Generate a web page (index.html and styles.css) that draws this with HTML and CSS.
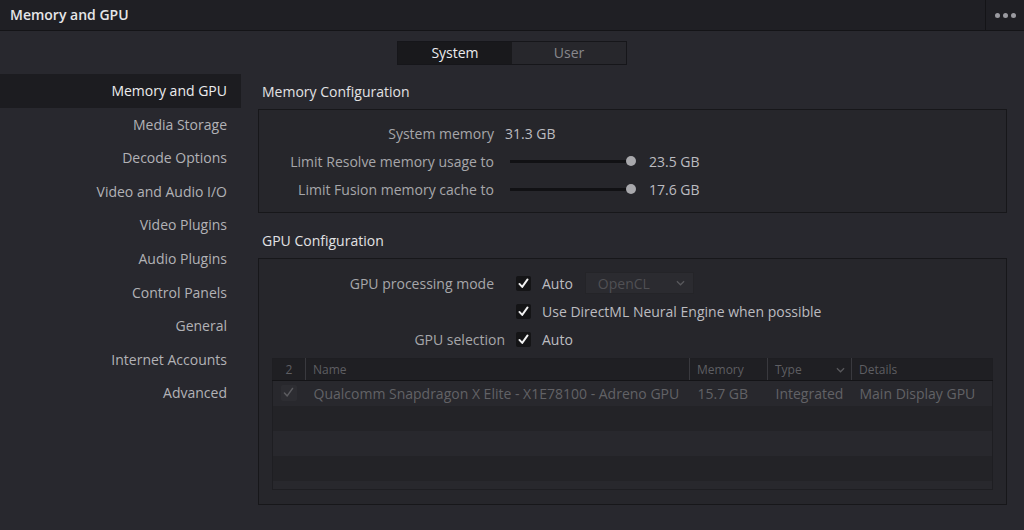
FILE: index.html
```html
<!DOCTYPE html>
<html lang="en">
<head>
    <meta charset="UTF-8">
    <title>Memory and GPU</title>
    <link rel="stylesheet" href="styles.css">
</head>
<body>
<div class="titlebar">
    <div class="title">Memory and GPU</div>
    <div class="more"><span></span><span></span><span></span></div>
</div>

<div class="tabs-row">
    <div class="tabs">
        <div class="tab active">System</div>
        <div class="tab">User</div>
    </div>
</div>

<div class="main">
    <ul class="sidebar">
        <li class="active">Memory and GPU</li>
        <li>Media Storage</li>
        <li>Decode Options</li>
        <li>Video and Audio I/O</li>
        <li>Video Plugins</li>
        <li>Audio Plugins</li>
        <li>Control Panels</li>
        <li>General</li>
        <li>Internet Accounts</li>
        <li>Advanced</li>
    </ul>

    <div class="content">
        <div class="heading first">Memory Configuration</div>
        <div class="box mem-box">
            <div class="row">
                <div class="label">System memory</div>
                <div class="value">31.3 GB</div>
            </div>
            <div class="row">
                <div class="label">Limit Resolve memory usage to</div>
                <div class="slider"><span class="knob"></span></div>
                <div class="value">23.5 GB</div>
            </div>
            <div class="row">
                <div class="label">Limit Fusion memory cache to</div>
                <div class="slider"><span class="knob"></span></div>
                <div class="value">17.6 GB</div>
            </div>
        </div>

        <div class="heading">GPU Configuration</div>
        <div class="box gpu-box">
            <div class="row">
                <div class="label wide pad">GPU processing mode</div>
                <span class="check"><svg viewBox="0 0 14 14"><path d="M3.2 7.4 L5.8 10.2 L10.8 3.2" /></svg></span>
                <div class="value">Auto</div>
                <div class="select">OpenCL <svg viewBox="0 0 10 6"><path d="M1 1 L5 5 L9 1" /></svg></div>
            </div>
            <div class="row">
                <div class="label wide"></div>
                <span class="check"><svg viewBox="0 0 14 14"><path d="M3.2 7.4 L5.8 10.2 L10.8 3.2" /></svg></span>
                <div class="value">Use DirectML Neural Engine when possible</div>
            </div>
            <div class="row">
                <div class="label wide">GPU selection</div>
                <span class="check"><svg viewBox="0 0 14 14"><path d="M3.2 7.4 L5.8 10.2 L10.8 3.2" /></svg></span>
                <div class="value">Auto</div>
            </div>

            <table class="gpu-table">
                <colgroup>
                    <col style="width:33px">
                    <col style="width:384px">
                    <col style="width:78px">
                    <col style="width:84px">
                    <col>
                </colgroup>
                <thead>
                    <tr>
                        <th class="num">2</th>
                        <th>Name</th>
                        <th>Memory</th>
                        <th>Type <svg class="th-arrow" viewBox="0 0 10 6"><path d="M1 1 L5 5 L9 1" /></svg></th>
                        <th>Details</th>
                    </tr>
                </thead>
                <tbody>
                    <tr>
                        <td class="num"><span class="check off"><svg viewBox="0 0 14 14"><path d="M3.2 7.4 L5.8 10.2 L10.8 3.2" /></svg></span></td>
                        <td>Qualcomm Snapdragon X Elite - X1E78100 - Adreno GPU</td>
                        <td>15.7 GB</td>
                        <td>Integrated</td>
                        <td>Main Display GPU</td>
                    </tr>
                    <tr><td></td><td></td><td></td><td></td><td></td></tr>
                    <tr><td></td><td></td><td></td><td></td><td></td></tr>
                    <tr><td></td><td></td><td></td><td></td><td></td></tr>
                    <tr><td></td><td></td><td></td><td></td><td></td></tr>
                </tbody>
            </table>
        </div>
    </div>
</div>
</body>
</html>
```

FILE: styles.css
```css
*{
    margin: 0;
    padding: 0;
    box-sizing: border-box;
}

body{
    background-color: #28282e;
    font-family: "Open Sans", "Noto Sans", sans-serif;
    font-size: 14px;
    color: #b8b8bc;
    width: 1024px;
    height: 530px;
    overflow: hidden;
}

.titlebar{
    display: flex;
    justify-content: space-between;
    height: 31px;
    background-color: #1f1f24;
    border-bottom: 1px solid #141417;
}

.title{
    padding-left: 10px;
    line-height: 30px;
    font-weight: 600;
    color: #e6e6e8;
}

.more{
    width: 39px;
    border-left: 1px solid #141417;
    display: flex;
    align-items: center;
    justify-content: center;
    gap: 3px;
}

.more span{
    width: 5px;
    height: 5px;
    border-radius: 50%;
    background-color: #9a9aa0;
}

.tabs-row{
    display: flex;
    justify-content: center;
    padding-top: 10px;
    height: 43px;
}

.tabs{
    display: flex;
    width: 230px;
    height: 24px;
    border: 1px solid #16161a;
    background-color: #27272c;
}

.tab{
    flex: 1;
    text-align: center;
    line-height: 22px;
    color: #88888c;
}

.tab.active{
    background-color: #19191c;
    color: #ececee;
}

.main{
    display: flex;
}

.sidebar{
    list-style: none;
    width: 241px;
}

.sidebar li{
    height: 33.6px;
    line-height: 33.6px;
    text-align: right;
    padding-right: 14px;
    color: #b2b2b6;
}

.sidebar li.active{
    background-color: #1c1c20;
    color: #ececee;
}

.content{
    margin-left: 17px;
    width: 749px;
}

.heading{
    height: 28px;
    line-height: 28px;
    padding-left: 4px;
    color: #e2e2e4;
    margin-top: 14px;
    margin-bottom: 3px;
}

.heading.first{
    margin-top: 4px;
}

.box{
    border: 1px solid #17171a;
    background-color: #26262b;
}

.mem-box{
    padding: 9px 0 9px 0;
}

.gpu-box{
    padding: 10px 13px 14px 13px;
}

.row{
    display: flex;
    align-items: center;
    height: 28px;
}

.label{
    width: 235px;
    text-align: right;
    color: #a6a6aa;
    margin-right: 11px;
}

.label.wide{
    width: 233px;
}

.label.pad{
    padding-right: 11px;
}

.value{
    color: #bcbcc0;
}

.slider{
    position: relative;
    width: 121px;
    height: 3px;
    margin-left: 5px;
    margin-right: 18px;
    background-color: #111114;
}

.knob{
    position: absolute;
    right: -5px;
    top: -4px;
    width: 10px;
    height: 10px;
    border-radius: 50%;
    background-color: #a8a8ac;
}

.check{
    display: inline-block;
    width: 15px;
    height: 15px;
    margin-right: 11px;
    border-radius: 2px;
    background-color: #141416;
}

.check svg{
    width: 15px;
    height: 15px;
    display: block;
}

.check path{
    fill: none;
    stroke: #f2f2f2;
    stroke-width: 1.8;
    stroke-linecap: round;
    stroke-linejoin: round;
}

.check.off{
    width: 16px;
    height: 16px;
    margin: 0;
    background-color: #2d2d32;
}

.check.off path{
    stroke: #5c5c60;
    stroke-width: 1.4;
}

.select{
    margin-left: 12px;
    width: 109px;
    height: 22px;
    padding-left: 12px;
    border: 1px solid #242428;
    background-color: #2b2b30;
    color: #505054;
    display: flex;
    align-items: center;
    gap: 26px;
}

.select svg{
    width: 9px;
    height: 6px;
}

.select path, .th-arrow path{
    fill: none;
    stroke: #58585c;
    stroke-width: 1.4;
}

.gpu-table{
    margin-top: 5px;
    width: 721px;
    table-layout: fixed;
    border-collapse: collapse;
    border: 1px solid #1e1e22;
    font-size: 14px;
}

.gpu-table th{
    height: 22px;
    background-color: #1f1f23;
    border-bottom: 1px solid #141417;
    border-left: 1px solid #39393e;
    font-weight: normal;
    font-size: 12px;
    color: #5e5e62;
    text-align: left;
    padding-left: 7px;
    position: relative;
}

.gpu-table th:first-child{
    border-left: none;
}

.gpu-table .num{
    text-align: center;
    padding-left: 0;
}

.th-arrow{
    position: absolute;
    right: 6px;
    top: 8px;
    width: 9px;
    height: 6px;
}

.gpu-table td{
    height: 25px;
    padding-left: 8px;
    color: #626266;
    white-space: nowrap;
    overflow: hidden;
}

.gpu-table td.num{
    padding-left: 0;
    padding-top: 3px;
}

.gpu-table tbody tr{
    background-color: #28282d;
}

.gpu-table tbody tr:nth-child(2),
.gpu-table tbody tr:nth-child(4){
    background-color: #232327;
}

.gpu-table tbody tr:last-child td{
    height: 9px;
}
```
